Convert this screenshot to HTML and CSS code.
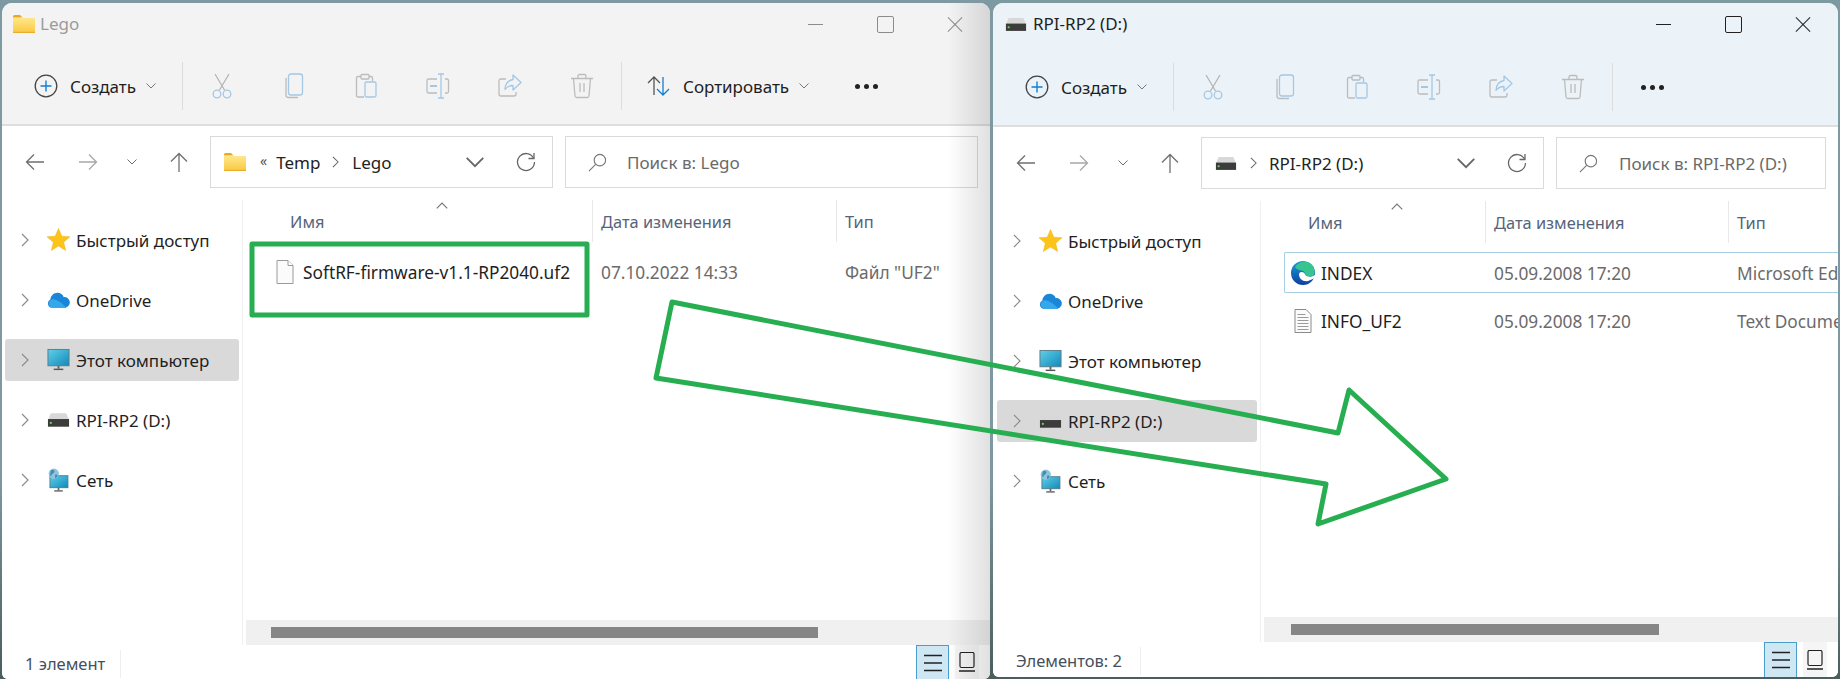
FILE: index.html
```html
<!DOCTYPE html>
<html lang="ru">
<head>
  <meta charset="UTF-8" />
  <meta name="viewport" content="width=device-width, initial-scale=1.0" />
  <title>Проводник</title>
  <link rel="stylesheet" href="styles.css">
</head>
<body>
  <!-- общие иконки -->
  <svg class="sprite" width="0" height="0">
    <defs>
      <linearGradient id="gFolder" x1="0" y1="0" x2="0" y2="1"><stop offset="0" stop-color="#ffe68c"/><stop offset="1" stop-color="#f9c93f"/></linearGradient>
      <linearGradient id="gScreen" x1="0" y1="0" x2="1" y2="1"><stop offset="0" stop-color="#5fd0ea"/><stop offset="1" stop-color="#1289b8"/></linearGradient>
      <linearGradient id="gEdge" x1="0" y1="0" x2="0" y2="1"><stop offset="0" stop-color="#1f9bd8"/><stop offset="1" stop-color="#0c3f9e"/></linearGradient>
      <symbol id="i-folder" viewBox="0 0 22 18">
        <path d="M0 1.5Q0 0 1.500 0H7l2.500 2.500H0z" fill="#eaa81f"/>
        <rect y="3" width="22" height="15" fill="url(#gFolder)"/>
        <rect y="16.800" width="22" height="1.200" fill="#e8ad2a"/>
      </symbol>
      <symbol id="i-drive" viewBox="0 0 24 16">
        <path d="M4 1h16l3 7H1z" fill="#d8d8d8"/>
        <rect x="1" y="7" width="22" height="8" fill="#3c3c3c"/>
        <rect x="3" y="10" width="2" height="2" fill="#5fe060"/>
      </symbol>
      <symbol id="i-star" viewBox="0 0 24 24">
        <path d="M12 0l3.400 8 8.600.7-6.600 5.600 2.100 8.700-7.500-4.700L4.500 23l2.100-8.700L0 8.700 8.600 8z" fill="#fcc419" stroke="#f4ae12" stroke-width=".5"/>
      </symbol>
      <symbol id="i-cloud" viewBox="0 0 24 17">
        <path d="M5 16.500A4.500 4.500 0 0 1 3.500 8C4 4 7 1 11 1c3 0 5.500 1.800 6.500 4.500A5.500 5.500 0 0 1 19 16.500z" fill="#1a86d8"/>
        <path d="M5 16.500A4.500 4.500 0 0 1 5 8c4-1 10 3 15 8.500z" fill="#35a8ec"/>
      </symbol>
      <symbol id="i-monitor" viewBox="0 0 24 24">
        <rect x="1" y="1" width="22" height="17" fill="url(#gScreen)" stroke="#5d7c8a"/>
        <rect x="11" y="18" width="2" height="3" fill="#666"/>
        <rect x="7" y="21" width="10" height="1.500" fill="#555"/>
      </symbol>
      <symbol id="i-network" viewBox="0 0 24 28">
        <rect x="2" y="9" width="21" height="14" fill="url(#gScreen)" stroke="#4f7686"/>
        <rect x="11" y="23" width="2" height="3" fill="#666"/>
        <rect x="7" y="26" width="10" height="1.500" fill="#555"/>
        <circle cx="6.500" cy="6.500" r="6" fill="#8fc4de"/>
        <path d="M3 3c3-2 5 0 4 2s-3 1-3 4l-2 0zM8 8c2-1 3 0 3 1s-2 3-3 3z" fill="#3f8fb5"/>
      </symbol>
      <symbol id="i-file" viewBox="0 0 18 24">
        <path d="M1 .5h11l5 5v18H1z" fill="#fbfbfb" stroke="#9a9a9a"/>
        <path d="M12 .5v5h5" fill="#fff" stroke="#9a9a9a"/>
      </symbol>
      <symbol id="i-text" viewBox="0 0 18 24">
        <path d="M1 .5h11l5 5v18H1z" fill="#fbfbfb" stroke="#8a8a8a"/>
        <path d="M3.500 5.500h8M3.500 8.500h11M3.500 11.500h11M3.500 14.500h11M3.500 17.500h11M3.500 20.500h11" stroke="#9a9a9a"/>
      </symbol>
      <symbol id="i-edge" viewBox="0 0 24 24">
        <circle cx="12" cy="12" r="12" fill="url(#gEdge)"/>
        <path d="M4 6C8 0 17-1 21 4c3 3 3 8 2 10-2 2-6 2-8 0-1-1-1-3-3-4-3-1-6-1-8-4z" fill="#37c58f"/>
        <path d="M8 13c0 5 4 8 9 7l7-3v-3c-4 3-9 2-10-1-1-2-5-3-6 0z" fill="#fff"/>
      </symbol>
      <symbol id="i-plus" viewBox="0 0 24 24">
        <circle cx="12" cy="12" r="10.800" fill="none" stroke="#444" stroke-width="1.300"/>
        <path d="M12 6.500v11M6.500 12h11" stroke="#0f7fd0" stroke-width="1.400"/>
      </symbol>
      <symbol id="i-cut" viewBox="0 0 24 26">
        <path d="M5 1l9.500 16M19 1L9.500 17" fill="none" stroke="#b5b5b5" stroke-width="1.300"/>
        <circle cx="7" cy="21" r="3.800" fill="none" stroke="#a3c8e6" stroke-width="1.300"/>
        <circle cx="17" cy="21" r="3.800" fill="none" stroke="#a3c8e6" stroke-width="1.300"/>
      </symbol>
      <symbol id="i-copy" viewBox="0 0 24 26">
        <path d="M4 5v17q0 2.500 2.500 2.500H16" fill="none" stroke="#bcbcbc" stroke-width="1.300"/>
        <rect x="6.500" y="1" width="14" height="21" rx="2.500" fill="none" stroke="#a3c8e6" stroke-width="1.300"/>
      </symbol>
      <symbol id="i-paste" viewBox="0 0 24 26">
        <path d="M10 24H4q-1.500 0-1.500-1.500V5Q2.500 3.500 4 3.500h3M15 3.500h2q1.500 0 1.500 1.500v3" fill="none" stroke="#bcbcbc" stroke-width="1.300"/>
        <rect x="7" y="1.500" width="8" height="4.500" rx="1" fill="none" stroke="#bcbcbc" stroke-width="1.300"/>
        <rect x="11" y="9" width="11" height="15" rx="1.500" fill="none" stroke="#a3c8e6" stroke-width="1.300"/>
      </symbol>
      <symbol id="i-rename" viewBox="0 0 24 26">
        <path d="M11 6H2.500Q1 6 1 7.500v11Q1 20 2.500 20H11M19 6h2q1.500 0 1.500 1.500v11q0 1.500-1.500 1.500h-2" fill="none" stroke="#bcbcbc" stroke-width="1.300"/>
        <path d="M15 1v24M12 1h6M12 25h6" stroke="#a3c8e6" stroke-width="1.300"/>
        <rect x="4" y="12" width="7" height="2" fill="#a3c8e6"/>
      </symbol>
      <symbol id="i-share" viewBox="0 0 24 26">
        <path d="M8 6H3Q1 6 1 8v13q0 2 2 2h13q2 0 2-2v-2" fill="none" stroke="#bcbcbc" stroke-width="1.300"/>
        <path d="M15 2l8 7.500-8 7.500v-4.500c-4 0-6 1-8 4 0-5 3-9 8-10z" fill="none" stroke="#a3c8e6" stroke-width="1.300" stroke-linejoin="round"/>
      </symbol>
      <symbol id="i-trash" viewBox="0 0 24 26">
        <path d="M1 5.500h22M8 5.500V3q0-1.500 1.500-1.500h5Q16 1.500 16 3v2.500M3.500 5.500L5 23q.2 1.500 1.700 1.500h10.600q1.500 0 1.700-1.500l1.500-17.500M10 10v9M14 10v9" fill="none" stroke="#bcbcbc" stroke-width="1.300"/>
      </symbol>
      <symbol id="i-sort" viewBox="0 0 24 20">
        <path d="M7 19V1M1 7l6-6 6 6" fill="none" stroke="#555" stroke-width="1.300"/>
        <path d="M16 1v18M10 13l6 6 6-6" fill="none" stroke="#0f7fd0" stroke-width="1.300"/>
      </symbol>
      <symbol id="i-left" viewBox="0 0 20 18"><path d="M19 9H1.500M9 1.500L1.500 9 9 16.500" fill="none" stroke="currentColor" stroke-width="1.300"/></symbol>
      <symbol id="i-right" viewBox="0 0 20 18"><path d="M1 9h17.500M11 1.500L18.500 9 11 16.500" fill="none" stroke="currentColor" stroke-width="1.300"/></symbol>
      <symbol id="i-up" viewBox="0 0 20 20"><path d="M10 20V1.500M2 9.500l8-8 8 8" fill="none" stroke="currentColor" stroke-width="1.300"/></symbol>
      <symbol id="i-down" viewBox="0 0 10 6"><path d="M.5.5L5 5 9.500.5" fill="none" stroke="currentColor"/></symbol>
      <symbol id="i-next" viewBox="0 0 8 14"><path d="M1 1l6 6-6 6" fill="none" stroke="currentColor" stroke-width="1.200"/></symbol>
      <symbol id="i-refresh" viewBox="0 0 20 20">
        <path d="M17.500 6A8.500 8.500 0 1 0 18.500 10" fill="none" stroke="currentColor" stroke-width="1.300"/>
        <path d="M18 1v5.500h-5.500" fill="none" stroke="currentColor" stroke-width="1.300"/>
      </symbol>
      <symbol id="i-search" viewBox="0 0 20 20">
        <circle cx="12.500" cy="7.500" r="6" fill="none" stroke="currentColor" stroke-width="1.200"/>
        <path d="M8 12L1 19" stroke="currentColor" stroke-width="1.200"/>
      </symbol>
      <symbol id="i-list" viewBox="0 0 20 20"><path d="M1 2.500h18M1 10h18M1 17.500h18" stroke="#222" stroke-width="1.300"/></symbol>
      <symbol id="i-tile" viewBox="0 0 20 20"><rect x="3" y=".5" width="14" height="15" rx="1.500" fill="none" stroke="#222" stroke-width="1.200"/><path d="M2 19h16" stroke="#222" stroke-width="1.300"/></symbol>
    </defs>
  </svg>

  <div class="desktop">

    <section class="window window-left">
      <header class="titlebar">
        <svg class="title-icon"><use href="#i-folder"/></svg>
        <span class="title-text">Lego</span>
        <div class="caption">
          <span class="cap-min"></span>
          <span class="cap-max"></span>
          <span class="cap-close"></span>
        </div>
      </header>

      <div class="toolbar">
        <div class="tool-new">
          <svg class="ic-plus"><use href="#i-plus"/></svg>
          <span class="tool-label">Создать</span>
          <svg class="ic-down"><use href="#i-down"/></svg>
        </div>
        <span class="tool-sep"></span>
        <span class="tool"><svg><use href="#i-cut"/></svg></span>
        <span class="tool"><svg><use href="#i-copy"/></svg></span>
        <span class="tool"><svg><use href="#i-paste"/></svg></span>
        <span class="tool"><svg><use href="#i-rename"/></svg></span>
        <span class="tool"><svg><use href="#i-share"/></svg></span>
        <span class="tool"><svg><use href="#i-trash"/></svg></span>
        <span class="tool-sep"></span>
        <div class="tool-sort">
          <svg class="ic-sort"><use href="#i-sort"/></svg>
          <span class="tool-label">Сортировать</span>
          <svg class="ic-down"><use href="#i-down"/></svg>
        </div>
        <span class="tool-more"><i></i><i></i><i></i></span>
      </div>

      <div class="navrow">
        <span class="nav-back"><svg><use href="#i-left"/></svg></span>
        <span class="nav-forward"><svg><use href="#i-right"/></svg></span>
        <span class="nav-recent"><svg><use href="#i-down"/></svg></span>
        <span class="nav-up"><svg><use href="#i-up"/></svg></span>
        <div class="address">
          <svg class="addr-icon"><use href="#i-folder"/></svg>
          <span class="addr-more">«</span>
          <span class="addr-text">Temp</span>
          <svg class="addr-next"><use href="#i-next"/></svg>
          <span class="addr-text">Lego</span>
          <svg class="addr-drop"><use href="#i-down"/></svg>
          <svg class="addr-refresh"><use href="#i-refresh"/></svg>
        </div>
        <div class="search">
          <svg class="search-icon"><use href="#i-search"/></svg>
          <span>Поиск в: Lego</span>
        </div>
      </div>

      <div class="main">
        <nav class="tree">
          <div class="tree-item"><svg class="tree-chev"><use href="#i-next"/></svg><svg class="tree-icon"><use href="#i-star"/></svg><span>Быстрый доступ</span></div>
          <div class="tree-item"><svg class="tree-chev"><use href="#i-next"/></svg><svg class="tree-icon"><use href="#i-cloud"/></svg><span>OneDrive</span></div>
          <div class="tree-item selected"><svg class="tree-chev"><use href="#i-next"/></svg><svg class="tree-icon"><use href="#i-monitor"/></svg><span>Этот компьютер</span></div>
          <div class="tree-item"><svg class="tree-chev"><use href="#i-next"/></svg><svg class="tree-icon"><use href="#i-drive"/></svg><span>RPI-RP2 (D:)</span></div>
          <div class="tree-item"><svg class="tree-chev"><use href="#i-next"/></svg><svg class="tree-icon"><use href="#i-network"/></svg><span>Сеть</span></div>
        </nav>
        <div class="files">
          <div class="files-head">
            <div class="col-name">Имя<svg class="sort-caret"><use href="#i-down"/></svg></div>
            <div class="col">Дата изменения</div>
            <div class="col">Тип</div>
          </div>
          <div class="files-body">
            <div class="file-row">
              <div class="file-name"><span class="file-slot"><svg class="ic-file"><use href="#i-file"/></svg></span>SoftRF-firmware-v1.1-RP2040.uf2</div>
              <div class="file-cell">07.10.2022 14:33</div>
              <div class="file-cell">Файл "UF2"</div>
            </div>
          </div>
          <div class="hscroll"><span class="thumb"></span></div>
        </div>
      </div>

      <footer class="status">
        <span class="status-text">1 элемент</span>
        <span class="view-list"><svg><use href="#i-list"/></svg></span>
        <span class="view-tile"><svg><use href="#i-tile"/></svg></span>
      </footer>
    </section>

    <section class="window window-right">
      <header class="titlebar">
        <svg class="title-icon"><use href="#i-drive"/></svg>
        <span class="title-text">RPI-RP2 (D:)</span>
        <div class="caption">
          <span class="cap-min"></span>
          <span class="cap-max"></span>
          <span class="cap-close"></span>
        </div>
      </header>

      <div class="toolbar">
        <div class="tool-new">
          <svg class="ic-plus"><use href="#i-plus"/></svg>
          <span class="tool-label">Создать</span>
          <svg class="ic-down"><use href="#i-down"/></svg>
        </div>
        <span class="tool-sep"></span>
        <span class="tool"><svg><use href="#i-cut"/></svg></span>
        <span class="tool"><svg><use href="#i-copy"/></svg></span>
        <span class="tool"><svg><use href="#i-paste"/></svg></span>
        <span class="tool"><svg><use href="#i-rename"/></svg></span>
        <span class="tool"><svg><use href="#i-share"/></svg></span>
        <span class="tool"><svg><use href="#i-trash"/></svg></span>
        <span class="tool-sep"></span>
        <span class="tool-more"><i></i><i></i><i></i></span>
      </div>

      <div class="navrow">
        <span class="nav-back"><svg><use href="#i-left"/></svg></span>
        <span class="nav-forward"><svg><use href="#i-right"/></svg></span>
        <span class="nav-recent"><svg><use href="#i-down"/></svg></span>
        <span class="nav-up"><svg><use href="#i-up"/></svg></span>
        <div class="address">
          <svg class="addr-icon"><use href="#i-drive"/></svg>
          <svg class="addr-next first"><use href="#i-next"/></svg>
          <span class="addr-text">RPI-RP2 (D:)</span>
          <svg class="addr-drop"><use href="#i-down"/></svg>
          <svg class="addr-refresh"><use href="#i-refresh"/></svg>
        </div>
        <div class="search">
          <svg class="search-icon"><use href="#i-search"/></svg>
          <span>Поиск в: RPI-RP2 (D:)</span>
        </div>
      </div>

      <div class="main">
        <nav class="tree">
          <div class="tree-item"><svg class="tree-chev"><use href="#i-next"/></svg><svg class="tree-icon"><use href="#i-star"/></svg><span>Быстрый доступ</span></div>
          <div class="tree-item"><svg class="tree-chev"><use href="#i-next"/></svg><svg class="tree-icon"><use href="#i-cloud"/></svg><span>OneDrive</span></div>
          <div class="tree-item"><svg class="tree-chev"><use href="#i-next"/></svg><svg class="tree-icon"><use href="#i-monitor"/></svg><span>Этот компьютер</span></div>
          <div class="tree-item selected"><svg class="tree-chev"><use href="#i-next"/></svg><svg class="tree-icon"><use href="#i-drive"/></svg><span>RPI-RP2 (D:)</span></div>
          <div class="tree-item"><svg class="tree-chev"><use href="#i-next"/></svg><svg class="tree-icon"><use href="#i-network"/></svg><span>Сеть</span></div>
        </nav>
        <div class="files">
          <div class="files-head">
            <div class="col-name">Имя<svg class="sort-caret"><use href="#i-down"/></svg></div>
            <div class="col">Дата изменения</div>
            <div class="col">Тип</div>
          </div>
          <div class="files-body">
            <div class="file-row focused">
              <div class="file-name"><span class="file-slot"><svg class="ic-edge"><use href="#i-edge"/></svg></span>INDEX</div>
              <div class="file-cell">05.09.2008 17:20</div>
              <div class="file-cell">Microsoft Edge HTML Document</div>
            </div>
            <div class="file-row">
              <div class="file-name"><span class="file-slot"><svg class="ic-file"><use href="#i-text"/></svg></span>INFO_UF2</div>
              <div class="file-cell">05.09.2008 17:20</div>
              <div class="file-cell">Text Document</div>
            </div>
          </div>
          <div class="hscroll"><span class="thumb"></span></div>
        </div>
      </div>

      <footer class="status">
        <span class="status-text">Элементов: 2</span>
        <span class="view-list"><svg><use href="#i-list"/></svg></span>
        <span class="view-tile"><svg><use href="#i-tile"/></svg></span>
      </footer>
    </section>

    <!-- пометки поверх окон -->
    <svg class="marks" viewBox="0 0 1840 679">
      <rect x="252" y="244" width="335" height="71" />
      <path d="M672 302L1338 433 1349 390 1446 479 1318 524 1326 484 656 378z" />
    </svg>
  </div>
</body>
</html>
```

FILE: styles.css
```css
* {
  box-sizing: border-box;
}
html, body {
  margin: 0;
  height: 679px;
  overflow: hidden;
}
body {
  font-family: "Noto Sans", "Open Sans", sans-serif;
  font-size: 17px;
  color: #1f1f1f;
  background: #7d99a2;
}
svg {
  display: block;
}
.sprite {
  position: absolute;
}

.desktop {
  position: relative;
  display: flex;
  align-items: flex-start;
  gap: 3px;
  height: 679px;
  padding: 3px 2px 0;
  background: linear-gradient(#7d99a2 0, #7d99a2 70%, #4b5d5c 100%);
}

/* окна */
.window {
  position: relative;
  display: flex;
  flex-direction: column;
  overflow: hidden;
  background: #fff;
  border-radius: 10px 10px 6px 6px;
}
.window-left {
  --nav-w: 241px;
  --name-col: 349px;
  --date-col: 244px;
  --caret: 193px;
  --thumb-l: 25px;
  --thumb-w: 547px;
  --status-w: 119px;
  --list-ml: 795px;
  --chrome: #f3f3f3;
  flex: none;
  width: 988px;
  height: 676px;
}
.window-right {
  --nav-w: 268px;
  --name-col: 224px;
  --date-col: 243px;
  --caret: 130px;
  --thumb-l: 27px;
  --thumb-w: 368px;
  --status-w: 148px;
  --list-ml: 623px;
  --chrome: #ebf3f8;
  flex: 1;
  height: 674px;
}
.window-left::after {
  content: "";
  position: absolute;
  top: 0;
  right: 0;
  bottom: 0;
  width: 42px;
  pointer-events: none;
  background: linear-gradient(90deg, rgba(0, 0, 0, 0), rgba(0, 0, 0, .12));
}

/* заголовок */
.titlebar {
  display: flex;
  align-items: center;
  height: 42px;
  padding-left: 11px;
  background: var(--chrome);
}
.window-right .titlebar {
  height: 43px;
  padding-left: 12px;
}
.title-icon {
  width: 22px;
  height: 18px;
  margin-right: 5px;
}
.window-right .title-icon {
  height: 15px;
  margin-right: 6px;
}
.title-text {
  margin-top: -2px;
  color: #9b9b9b;
}
.window-right .title-text {
  color: #222;
}
.caption {
  display: flex;
  margin-left: auto;
  height: 38px;
  color: #8c8c8c;
}
.window-right .caption {
  color: #222;
}
.caption span {
  position: relative;
  display: flex;
  align-items: center;
  justify-content: center;
  width: 70px;
}
.cap-min::before {
  content: "";
  width: 15px;
  border-top: 1px solid currentColor;
}
.cap-max::before {
  content: "";
  width: 15px;
  height: 15px;
  border: 1.5px solid currentColor;
  border-radius: 2px;
}
.cap-close::before,
.cap-close::after {
  content: "";
  position: absolute;
  width: 20px;
  border-top: 1.3px solid currentColor;
  transform: rotate(45deg);
}
.cap-close::after {
  transform: rotate(-45deg);
}

/* панель команд */
.toolbar {
  display: flex;
  align-items: center;
  height: 81px;
  padding: 3px 0 0 32px;
  background: var(--chrome);
  border-bottom: 2px solid #dedede;
}
.tool-new {
  display: flex;
  align-items: center;
  width: 145px;
}
.ic-plus {
  width: 24px;
  height: 24px;
  margin-right: 12px;
}
.tool-label {
  margin-right: 10px;
  white-space: nowrap;
}
.ic-down {
  width: 10px;
  height: 6px;
  color: #777;
}
.tool-sep {
  flex: none;
  width: 1px;
  height: 48px;
  margin: 0 3px;
  background: #dcdcdc;
}
.tool {
  display: flex;
  justify-content: center;
  width: 72px;
}
.tool svg {
  width: 24px;
  height: 26px;
}
.tool-sort {
  display: flex;
  align-items: center;
  width: 208px;
  padding-left: 22px;
}
.ic-sort {
  width: 24px;
  height: 20px;
  margin-right: 12px;
}
.tool-more {
  display: flex;
  gap: 4px;
  margin-left: 22px;
}
.window-right .tool-more {
  margin-left: 25px;
}
.tool-more i {
  width: 5px;
  height: 5px;
  border-radius: 50%;
  background: #222;
}

/* адресная строка */
.navrow {
  display: flex;
  align-items: flex-start;
  height: 74px;
  padding: 10px 12px 0 8px;
  color: #6f6f6f;
}
.navrow > span {
  display: flex;
  align-items: center;
  justify-content: center;
  height: 52px;
}
.nav-back { width: 50px; }
.nav-forward { width: 56px; color: #a8a8a8; }
.nav-recent { width: 32px; }
.nav-up { width: 62px; }
.nav-back svg,
.nav-forward svg {
  width: 20px;
  height: 18px;
}
.nav-recent svg {
  width: 10px;
  height: 6px;
}
.nav-up svg {
  width: 20px;
  height: 20px;
}
.address {
  display: flex;
  align-items: center;
  flex: none;
  width: 343px;
  height: 52px;
  padding-left: 13px;
  border: 1px solid #dadada;
  color: #222;
}
.addr-icon {
  width: 22px;
  height: 18px;
}
.window-right .addr-icon {
  height: 15px;
}
.addr-more {
  margin: -4px 9px 0 14px;
  font-size: 14px;
  color: #555;
}
.addr-next {
  width: 7px;
  height: 12px;
  margin: 0 13px 0 12px;
  color: #666;
}
.addr-next.first {
  margin: 0 12px 0 13px;
}
.addr-drop {
  width: 20px;
  height: 11px;
  margin-left: auto;
  color: #666;
}
.addr-refresh {
  width: 20px;
  height: 20px;
  margin: 0 16px 0 31px;
  color: #666;
}
.search {
  display: flex;
  align-items: center;
  flex: 1;
  height: 52px;
  margin-left: 12px;
  padding-left: 22px;
  border: 1px solid #dadada;
  color: #6a6a6a;
}
.search-icon {
  width: 19px;
  height: 19px;
  margin-right: 20px;
  color: #777;
}
.window-right .search-icon {
  margin-right: 21px;
}

/* основная часть */
.main {
  display: flex;
  flex: 1;
  min-height: 0;
}
.tree {
  display: flex;
  flex-direction: column;
  flex: none;
  gap: 18px;
  width: var(--nav-w);
  padding: 19px 3px 0;
  border-right: 1px solid #f0f0f0;
}
.window-right .tree {
  padding-left: 4px;
}
.tree-item {
  display: flex;
  align-items: center;
  height: 42px;
  padding-left: 16px;
  border-radius: 3px;
  white-space: nowrap;
}
.tree-item.selected {
  background: #d9d9d9;
}
.tree-chev {
  width: 8px;
  height: 14px;
  margin-right: 18px;
  color: #8c8c8c;
}
.tree-icon {
  width: 23px;
  height: 24px;
  margin-right: 6px;
}

.files {
  display: flex;
  flex-direction: column;
  flex: 1;
  min-width: 0;
  overflow: hidden;
}
.files-head {
  display: grid;
  grid-template-columns: var(--name-col) var(--date-col) 1fr;
  height: 51px;
  font-size: 16.4px;
  color: #55647a;
  white-space: nowrap;
}
.col-name {
  position: relative;
  height: 42px;
  padding-left: 47px;
  line-height: 44px;
}
.col {
  height: 42px;
  padding-left: 8px;
  line-height: 44px;
  border-left: 1px solid #e8e8e8;
}
.sort-caret {
  position: absolute;
  top: 2px;
  left: var(--caret);
  width: 12px;
  height: 7px;
  color: #777;
  transform: rotate(180deg);
}
.files-body {
  display: flex;
  flex-direction: column;
  flex: 1;
  gap: 7px;
  margin-left: 23px;
}
.file-row {
  display: grid;
  grid-template-columns: calc(var(--name-col) - 23px) var(--date-col) 1fr;
  align-items: center;
  height: 41px;
  padding-top: 1px;
  border: 1px solid transparent;
  border-right: 0;
  font-size: 17.3px;
  white-space: nowrap;
}
.file-row.focused {
  border-color: #a6cfe6;
  border-radius: 2px 0 0 2px;
}
.file-name {
  display: flex;
  align-items: center;
}
.file-slot {
  display: flex;
  justify-content: center;
  flex: none;
  width: 36px;
}
.ic-file {
  width: 18px;
  height: 24px;
}
.ic-edge {
  width: 24px;
  height: 24px;
}
.file-cell {
  padding-left: 8px;
  color: #6b6b6b;
}
.hscroll {
  flex: none;
  height: 25px;
  margin-left: 3px;
  padding: 7px 0 7px var(--thumb-l);
  background: #f0f0f0;
}
.thumb {
  display: block;
  width: var(--thumb-w);
  height: 11px;
  background: #868686;
}

/* строка состояния */
.status {
  display: flex;
  flex: none;
  height: 34px;
  background: #fff;
}
.window-right .status {
  height: 35px;
}
.status-text {
  flex: none;
  width: var(--status-w);
  height: 28px;
  margin-top: 5px;
  padding-left: 23px;
  line-height: 27px;
  font-size: 16.5px;
  color: #44505c;
  border-right: 1px solid #eeeeee;
}
.view-list {
  display: flex;
  align-items: center;
  justify-content: center;
  width: 33px;
  margin-left: var(--list-ml);
  border: 1px solid #4a9fca;
  border-bottom: 0;
  background: #cfe6f3;
}
.view-list svg,
.view-tile svg {
  width: 20px;
  height: 20px;
}
.view-tile {
  display: flex;
  align-items: center;
  justify-content: center;
  width: 24px;
  margin-left: 6px;
  background: #f5f5f5;
}

/* зелёные пометки */
.marks {
  position: absolute;
  top: 0;
  left: 0;
  width: 1840px;
  height: 679px;
  fill: none;
  stroke: #27ae50;
  stroke-width: 5;
  stroke-linejoin: round;
  pointer-events: none;
}
```
